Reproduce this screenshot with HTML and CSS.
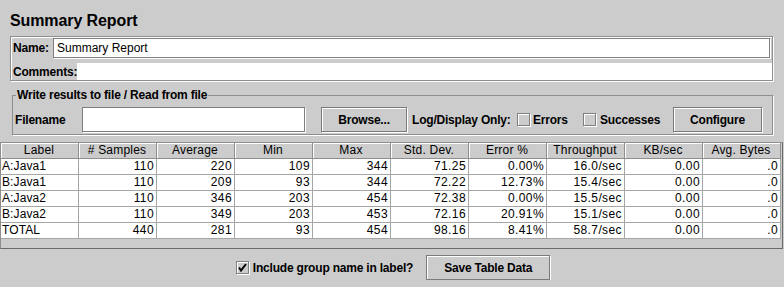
FILE: index.html
```html
<!DOCTYPE html>
<html>
<head>
<meta charset="utf-8">
<link rel="stylesheet" href="styles.css">
</head>
<body>
<div class="title">Summary Report</div>
<div class="props">
  <div class="prow name-row"><span class="lbl name-lbl">Name:</span><div class="field name-field">Summary Report</div></div>
  <div class="prow comm-row"><span class="lbl comm-lbl">Comments:</span><div class="comm-field"></div></div>
</div>
<fieldset class="fileset">
  <legend>Write results to file / Read from file</legend>
  <div class="frow">
    <span class="lbl file-lbl">Filename</span>
    <div class="field file-field"></div>
    <button class="btn browse">Browse...</button>
    <span class="lbl logonly">Log/Display Only:</span>
    <span class="check"></span><span class="lbl errors">Errors</span>
    <span class="check"></span><span class="lbl succ">Successes</span>
    <button class="btn configure">Configure</button>
  </div>
</fieldset>
<div class="tablewrap">
  <table class="grid">
    <thead>
      <tr><th>Label</th><th># Samples</th><th>Average</th><th>Min</th><th>Max</th><th>Std. Dev.</th><th>Error %</th><th>Throughput</th><th>KB/sec</th><th>Avg. Bytes</th></tr>
    </thead>
    <tbody>
      <tr><td class="l">A:Java1</td><td>110</td><td>220</td><td>109</td><td>344</td><td>71.25</td><td>0.00%</td><td>16.0/sec</td><td>0.00</td><td>.0</td></tr>
      <tr><td class="l">B:Java1</td><td>110</td><td>209</td><td>93</td><td>344</td><td>72.22</td><td>12.73%</td><td>15.4/sec</td><td>0.00</td><td>.0</td></tr>
      <tr><td class="l">A:Java2</td><td>110</td><td>346</td><td>203</td><td>454</td><td>72.38</td><td>0.00%</td><td>15.5/sec</td><td>0.00</td><td>.0</td></tr>
      <tr><td class="l">B:Java2</td><td>110</td><td>349</td><td>203</td><td>453</td><td>72.16</td><td>20.91%</td><td>15.1/sec</td><td>0.00</td><td>.0</td></tr>
      <tr><td class="l">TOTAL</td><td>440</td><td>281</td><td>93</td><td>454</td><td>98.16</td><td>8.41%</td><td>58.7/sec</td><td>0.00</td><td>.0</td></tr>
    </tbody>
  </table>
</div>
<div class="bottom">
  <span class="check checked"><svg width="11" height="11" viewBox="0 0 11 11"><path d="M2 5.5 L4 8.5 L9 2" fill="none" stroke="#000" stroke-width="2"/></svg></span>
  <span class="lbl incl">Include group name in label?</span>
  <button class="btn save">Save Table Data</button>
</div>
</body>
</html>
```
FILE: styles.css
```css
html, body {
  margin: 0;
  padding: 0;
  background: #cccccc;
  font-family: "Liberation Sans", Arial, sans-serif;
  color: #000;
}
.title {
  height: 36px;
  box-sizing: border-box;
  padding: 6px 0 0 10px;
  display: flex;
  align-items: center;
  font-weight: bold;
  font-size: 16px;
  letter-spacing: -0.1px;
}
.lbl {
  font-weight: bold;
  font-size: 12px;
  white-space: nowrap;
  letter-spacing: -0.2px;
}
.props {
  margin: 0 11px 0 10px;
  height: 45px;
  box-sizing: border-box;
  border: 1px solid #8e8e8e;
  box-shadow: inset 1px 1px 0 #fff, 1px 1px 0 #fff;
  padding: 1px 0 0 1px;
  display: flex;
  flex-direction: column;
  gap: 5px;
}
.prow {
  display: flex;
  align-items: center;
}
.name-row { height: 20px; }
.comm-row { height: 17px; }
.name-lbl { width: 41px; padding-left: 1px; box-sizing: border-box; }
.comm-lbl { width: 65px; padding-left: 1px; box-sizing: border-box; }
.field {
  background: #fff;
  border: 1px solid #7f7f7f;
  box-shadow: 1px 1px 0 #fff;
  box-sizing: border-box;
}
.name-field {
  flex: 1;
  height: 20px;
  margin-right: 2px;
  font-size: 12px;
  line-height: 18px;
  padding-left: 3px;
}
.comm-field {
  flex: 1;
  height: 17px;
  background: #fff;
}
.fileset {
  margin: 7px 11px 0 12px;
  padding: 5px 2px 2px 2px;
  border: 1px solid #8e8e8e;
  box-shadow: 1px 1px 0 #fff;
  min-width: 0;
}
.fileset legend {
  margin-left: 1px;
  padding: 0 1px;
  font-weight: bold;
  font-size: 12px;
  line-height: 14px;
  letter-spacing: -0.2px;
  background: #cccccc;
}
.frow {
  display: flex;
  align-items: center;
  height: 25px;
}
.file-lbl { width: 67px; }
.file-field { width: 223px; height: 25px; }
.btn {
  height: 25px;
  box-sizing: border-box;
  background: #cccccc;
  border: 1px solid #7a7a7a;
  box-shadow: inset 1px 1px 0 #fff, 1px 1px 0 #fff;
  font-family: "Liberation Sans", Arial, sans-serif;
  font-weight: bold;
  font-size: 12px;
  letter-spacing: -0.2px;
  padding: 0;
  color: #000;
}
.browse { margin-left: 16px; width: 86px; }
.logonly { margin-left: 5px; width: 105px; }
.check {
  width: 13px;
  height: 13px;
  box-sizing: border-box;
  border: 1px solid #7f7f7f;
  box-shadow: inset 1px 1px 0 #fff, 1px 1px 0 #fff;
  background: #cccccc;
  flex: none;
  display: flex;
  align-items: center;
  justify-content: center;
}
.errors { margin-left: 3px; width: 50px; }
.succ { margin-left: 4px; width: 73px; }
.configure { width: 89px; }
.tablewrap {
  margin: 7px 1px 0 0;
  height: 107px;
  box-sizing: border-box;
  border: 1px solid #8e8e8e;
  border-right-color: #6a6a6a;
  border-bottom-color: #6a6a6a;
}
.grid {
  border-collapse: separate;
  border-spacing: 0;
  table-layout: fixed;
  width: 780px;
  font-size: 12px;
  letter-spacing: 0.4px;
}
.grid th, .grid td {
  width: 78px;
  height: 16px;
  box-sizing: border-box;
  padding: 0 2px 0 1px;
  white-space: nowrap;
  overflow: hidden;
  line-height: 15px;
  font-weight: normal;
}
.grid th {
  background: #cccccc;
  text-align: center;
  border-right: 1px solid #8e8e8e;
  border-bottom: 1px solid #8e8e8e;
  box-shadow: inset 1px 1px 0 #fff;
  letter-spacing: 0.2px;
}
.grid td {
  background: #fff;
  text-align: right;
  border-right: 1px solid #a6a6a6;
  border-bottom: 1px solid #a6a6a6;
}
.grid td.l { text-align: left; letter-spacing: 0.1px; }
.bottom {
  margin-top: 6px;
  display: flex;
  justify-content: center;
  align-items: center;
  height: 25px;
  padding-left: 2px;
}
.incl { margin-left: 4px; margin-right: 13px; }
.save { width: 124px; }
```
